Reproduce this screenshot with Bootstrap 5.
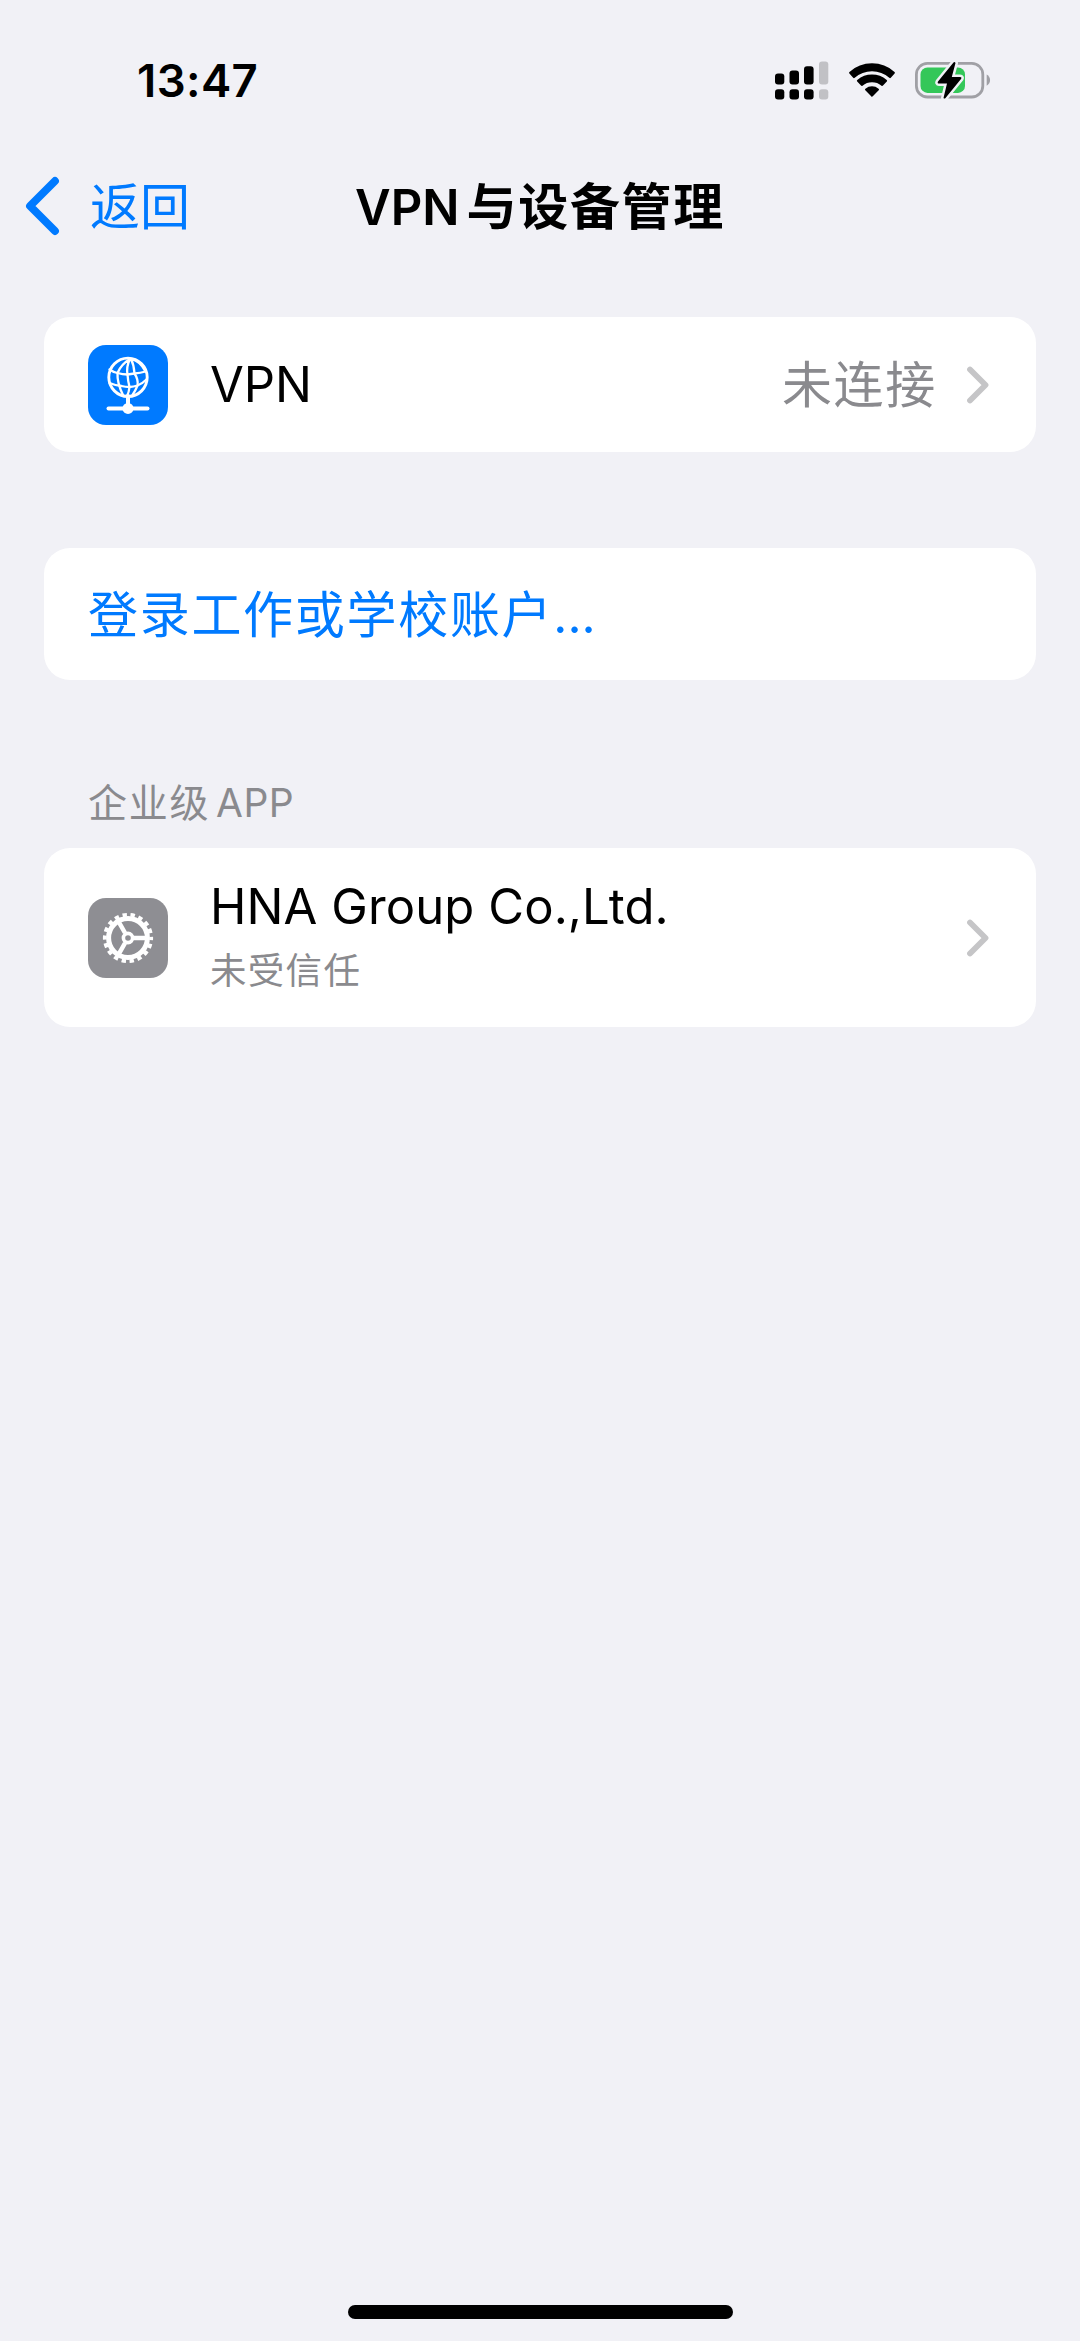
<!DOCTYPE html>
<html lang="zh-CN">
<head>
<meta charset="utf-8">
<meta name="viewport" content="width=device-width, initial-scale=1">
<title>VPN与设备管理</title>
<link href="https://cdn.jsdelivr.net/npm/bootstrap@5.3.0/dist/css/bootstrap.min.css" rel="stylesheet">
<style>
  body { background: #f1f1f6; color: #000; font-family: Inter, "Noto Sans CJK SC", sans-serif; font-size: 49px; line-height: 1; }
  .screen { height: 2341px; overflow: hidden; }
  .status-bar { height: 162px; padding: 0 89px 0 137px; }
  .clock { font-size: 45.5px; letter-spacing: .4px; }
  .nav-top { height: 90px; grid-template-columns: 1fr auto 1fr; padding: 0 24px; margin-bottom: -2px; }
  .nav-top svg { margin-top: -2px; }
  .tint { color: #007aff; }
  .dim { color: #8a8a8e; }
  .back-link { gap: 30px; font-size: 50px; }
  .page-title { font-size: 49px; }
  .page-title .cjk-wide { margin-left: 7px; }
  .cjk-wide { font-size: 50px; letter-spacing: 1.7px; }
  .groups { padding: 67px 44px 0; }
  .cell { border-radius: 26px; padding: 0 45px 0 44px; }
  .app-icon { width: 80px; height: 80px; margin-right: 42px; }
  .chev { margin-left: 28px; }
  .h-vpn { height: 135px; margin-bottom: 96px; }
  .vpn-name { margin-top: -1px; }
  .h-login { height: 132px; margin-bottom: 97px; padding-top: 2px; }
  .h-org { height: 179px; }
  .section-label { height: 71px; font-size: 39px; padding: 6px 44px 0; }
  .section-label .cjk-wide { font-size: 39px; margin-right: 6px; }
  .app-word { letter-spacing: .4px; }
  .org-text { gap: 22px; margin-top: -4px; }
  .org-name { letter-spacing: .1px; }
  .sub { font-size: 36.5px; letter-spacing: 1.3px; }
  .home-bar { width: 385px; height: 14px; margin-bottom: 22px; }
  svg { display: block; flex: none; }
</style>
</head>
<body>
<div class="screen d-flex flex-column">
  <header class="status-bar d-flex justify-content-between align-items-center">
    <span class="clock fw-semibold">13:47</span>
    <div class="d-flex align-items-center gap-3">
      <svg width="58" height="40" viewBox="774 60.500 58 40">
        <g><rect x="775" y="73" width="9.3" height="11" rx="3"/><rect x="789.5" y="70" width="9.5" height="14" rx="3"/><rect x="804" y="65.7" width="9.6" height="18.3" rx="3"/>
        <rect x="775" y="88.7" width="9.3" height="10.3" rx="3"/><rect x="789.5" y="88.7" width="9.5" height="10.3" rx="3"/><rect x="804" y="88.7" width="9.6" height="10.3" rx="3"/></g>
        <g fill="#c1c1c5"><rect x="819" y="61" width="9.3" height="23" rx="3"/><rect x="819" y="88.7" width="9.3" height="10.3" rx="3"/></g>
      </svg>
      <svg width="50" height="40" viewBox="-24 -36 50 40" stroke="#000" stroke-width="2.200" stroke-linejoin="round">
        <path d="M-21.8-24.2A32.6 32.6 0 0 1 21.8-24.2L18-20A27.2 27.2 0 0 0-18-20Z"/>
        <path d="M-14-16.2A21.6 21.6 0 0 1 14-16.2L10.2-12.2A15.9 15.9 0 0 0-10.2-12.2Z"/>
        <path d="M-5.9-7.5A9.6 9.6 0 0 1 5.9-7.5L0-1.4Z"/>
      </svg>
      <svg width="77" height="40" viewBox="914 61 77 40">
        <rect x="916.4" y="63.4" width="66.400" height="33.600" rx="11" fill="none" stroke="#a0a0a5" stroke-width="2.8"/>
        <path d="M986.7 74.5c4.5 2.4 4.5 8.800 0 11.200z" fill="#a0a0a5"/>
        <rect x="920.5" y="67.500" width="44.500" height="25.400" rx="7" fill="#34c759"/>
        <path d="M953.500 62.500L938 81.500q-1 2 1 2h8l-3.500 14.500q1 1 2 0l15.500-19q1.200-2-1-2h-8.200l3.700-14q-.8-1.500-2-.5z" fill="#000" stroke="#f1f1f6" stroke-width="5" paint-order="stroke" stroke-linejoin="round"/>
      </svg>
    </div>
  </header>
  <nav class="nav-top d-grid align-items-center">
    <a class="back-link tint d-flex align-items-center text-decoration-none" href="#">
      <svg width="36" height="60" viewBox="0 0 36 60" fill="none" stroke="#007aff" stroke-width="7.800" stroke-linecap="round" stroke-linejoin="round"><path d="M31 5L6 30l25 25"/></svg>
      <span>返回</span>
    </a>
    <h1 class="page-title fw-semibold m-0">VPN<span class="cjk-wide">与设备管理</span></h1>
    <span></span>
  </nav>
  <main class="groups flex-grow-1">
    <a class="cell h-vpn bg-white d-flex align-items-center text-decoration-none text-black" href="#">
      <svg class="app-icon" viewBox="0 0 80 80">
        <rect width="80" height="80" rx="18" fill="#007aff"/>
        <g fill="none" stroke="#fff" stroke-width="2.300" stroke-linecap="round">
          <circle cx="40" cy="32.300" r="19.200" stroke-width="2.900"/>
          <path d="M42 14C37 17 32 22 29.500 28q-.5 10 5.500 22M42 14C39.500 19 38.500 24 39.500 29.500q.5 7 2 12.500-.5 5-2.500 9M43 14q3 6 3.500 14.500M43 14q9 2 14.500 12.500M46.500 28.500q4 6 3 12-2 5-5 9.500"/>
          <path d="M21.500 24.500q3.500 2.500 8 3.500 5 1.500 10 1.500l7-1q6-.5 11-2M21.500 38q6 2.500 12 3 4 1 8 1 4-.3 8-1.500 5-2 9-6"/>
          <path d="M40 51v10" stroke-width="4"/>
          <path d="M20.500 63.400h39" stroke-width="4"/>
        </g>
        <circle cx="40" cy="63.400" r="5.500" fill="#fff"/>
      </svg>
      <span class="vpn-name">VPN</span>
      <span class="dim cjk-wide ms-auto">未连接</span>
      <svg class="chev" width="26" height="40" viewBox="0 0 26 40" fill="none" stroke="#c5c5c7" stroke-width="5.800" stroke-linecap="round" stroke-linejoin="round"><path d="M5 4.500L20.500 20 5 35.500"/></svg>
    </a>
    <a class="cell h-login bg-white d-flex align-items-center text-decoration-none tint" href="#">
      <span class="cjk-wide">登录工作或学校账户</span><span>...</span>
    </a>
    <div class="section-label dim"><span class="cjk-wide">企业级</span><span class="app-word">APP</span></div>
    <a class="cell h-org bg-white d-flex align-items-center text-decoration-none text-black" href="#">
      <svg class="app-icon" viewBox="0 0 80 80">
        <rect width="80" height="80" rx="18" fill="#8e8e93"/>
        <g fill="none" stroke="#fff">
          <circle cx="40" cy="40" r="23.200" stroke-width="3.800" stroke-dasharray="4.400 3.698" stroke-dashoffset="2.200"/>
          <circle cx="40" cy="40" r="19.400" stroke-width="5"/>
          <circle cx="40" cy="40" r="4.600" stroke-width="3.600"/>
          <path d="M46 40h12M37 34.800l-6-10.400M37 45.200l-6 10.400" stroke-width="4.400"/>
        </g>
      </svg>
      <div class="org-text d-flex flex-column">
        <span class="org-name">HNA Group Co.,Ltd.</span>
        <span class="sub dim">未受信任</span>
      </div>
      <svg class="ms-auto" width="26" height="40" viewBox="0 0 26 40" fill="none" stroke="#c5c5c7" stroke-width="5.800" stroke-linecap="round" stroke-linejoin="round"><path d="M5 4.500L20.500 20 5 35.500"/></svg>
    </a>
  </main>
  <div class="home-bar bg-black rounded-pill mx-auto"></div>
</div>
<script src="https://cdn.jsdelivr.net/npm/bootstrap@5.3.0/dist/js/bootstrap.bundle.min.js"></script>
</body>
</html>
